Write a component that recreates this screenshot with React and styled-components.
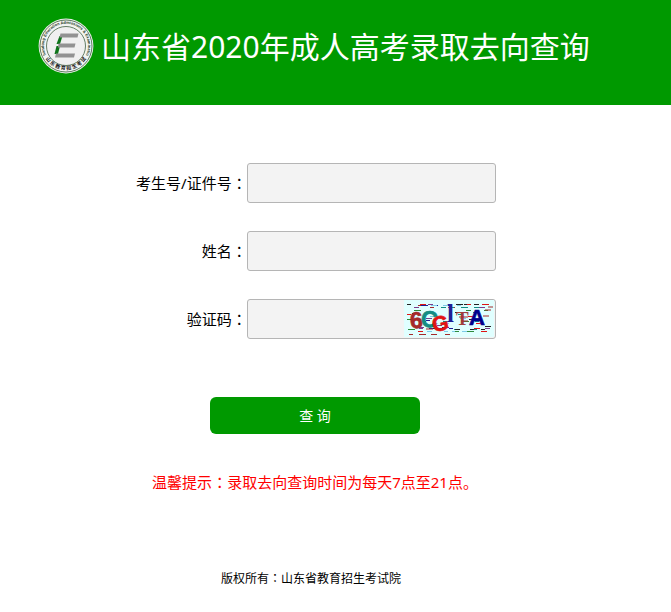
import React, { useState } from 'react';
import styled, { createGlobalStyle } from 'styled-components';

const GlobalStyle = createGlobalStyle`
    body {
        margin: 0;
        background: white;
        color: black;
        font-family: "Noto Sans", "Noto Sans CJK SC", sans-serif;
        font-size: 15px;
        font-weight: 400;
    }
`

const Header = styled.header`
    display: flex;
    align-items: flex-start;
    gap: 7px;
    min-height: 105px;
    padding: 18px 38px 0;
    box-sizing: border-box;
    background: #009900;
`

const Logo = styled.svg`
    flex: none;
    width: 56px;
    height: 56px;
`

const Title = styled.h1`
    margin: 0;
    color: white;
    font-size: 30px;
    font-weight: 400;
    line-height: 58px;
    white-space: nowrap;
`

const Main = styled.main`
    padding: 58px 41px 0 0;
`

const Form = styled.form`
    display: flex;
    flex-direction: column;
    gap: 28px;
`

const Row = styled.div`
    display: grid;
    grid-template-columns: calc(39% + 1px) 249px;
    align-items: center;
`

const Label = styled.label`
    line-height: 20px;
    text-align: right;
    white-space: nowrap;
`

const Colon = styled.span`
    font-family: "Noto Sans CJK TC", sans-serif;
`

const Field = styled.div`
    position: relative;
`

const Input = styled.input`
    display: block;
    width: 100%;
    height: 40px;
    padding: 0 8px;
    padding-right: ${props => props.$withCode ? '98px' : '8px'};
    box-sizing: border-box;
    border: 1px solid #b5b5b5;
    border-radius: 3px;
    background: #f3f3f3;
    font: inherit;
    outline: none;
`

const CodeButton = styled.button`
    position: absolute;
    top: 1px;
    right: 2px;
    padding: 0;
    border: 0;
    background: #e0ffff;
    cursor: pointer;

    svg {
        display: block;
    }
`

const SubmitButton = styled.button`
    align-self: center;
    width: 210px;
    height: 37px;
    margin-top: 30px;
    padding: 0 0 2px;
    border: 0;
    border-radius: 6px;
    background: #009900;
    color: white;
    font: inherit;
    font-size: 14px;
    cursor: pointer;
`

const Hint = styled.p`
    margin: 38px 0 0;
    color: red;
    line-height: 20px;
    text-align: center;
`

const Footer = styled.footer`
    padding: 77px 49px 24px 0;
    font-size: 12px;
    line-height: 18px;
    text-align: center;
`

const fields = [
    { id: 'number', label: '考生号/证件号' },
    { id: 'name', label: '姓名' },
    { id: 'code', label: '验证码', withCode: true },
]

const letters = [
    { char: '6', x: 6, y: 28, size: 23, color: '#a52a2a', tilt: -4 },
    { char: 'C', x: 17, y: 27, size: 23, color: '#148c84', tilt: 4 },
    { char: 'G', x: 28, y: 31, size: 21, color: '#e01414', tilt: -12 },
    { char: 'l', x: 43, y: 22, size: 25, color: '#1e1e96', tilt: 0, serif: true },
    { char: 'T', x: 52, y: 25, size: 19, color: '#a0403c', tilt: 0, serif: true },
    { char: 'A', x: 65, y: 25, size: 22, color: '#00008b', tilt: 0 },
]

const noiseColors = ['#222222', '#1e1e96', '#e01414', '#148c84', '#a52a2a', '#2e8b3c', '#7ecbe8', '#7a3c8c']

// short dashes, two thirds of them along the top and bottom edges
const noise = Array.from({ length: 78 }, (_, i) => {
    const band = [4, 28, 12][i % 3];
    const height = [7, 7, 16][i % 3];

    return {
        x: 3 + (i * 37 + (i * i) % 11) % 79,
        y: band + (i * 5 + (i * i) % 7) % height,
        width: 4 + (i * 5) % 4,
        color: noiseColors[(i * 3 + i % 5) % noiseColors.length],
    }
})

const Emblem = () => (
    <Logo viewBox="0 0 56 56" role="img" aria-label="山东省教育招生考试院">
        <defs>
            <path id="ringTop" d="M8.5 38 A22 22 0 1 1 47.5 38" />
            <path id="ringBottom" d="M7 39.5 A24 24 0 0 0 49 39.5" />
        </defs>
        <circle cx="28" cy="28" r="27.4" fill="#f2f4f2" />
        <circle cx="28" cy="28" r="26" fill="none" stroke="#4c6c4c" strokeWidth="0.9" />
        <circle cx="28" cy="28" r="19.5" fill="#f0f0f0" stroke="#557055" strokeWidth="0.9" />
        <text fontFamily="Liberation Sans, sans-serif" fontSize="4" fontWeight="700" fill="#263d26" textAnchor="middle">
            <textPath href="#ringTop" startOffset="50%">Shandong Education Admissions &amp; Examination</textPath>
        </text>
        <text fontFamily="Noto Sans CJK SC, sans-serif" fontSize="5" fontWeight="700" fill="#111111" textAnchor="middle">
            <textPath href="#ringBottom" startOffset="50%">山 东 教 育 招 生 考 试</textPath>
        </text>
        <path d="M21.5 18 H24.5 L22 26 H18.5Z M18.5 28 H22 L20 36 H16.5Z" fill="#0d7419" />
        <path d="M22.5 15.5 H40.5 L39.5 19.5 H21.5Z M20.5 25.5 H37.5 L36.5 29.5 H20Z M18 35.5 H37 L36 39.5 H17Z" fill="#929292" />
    </Logo>
)

const CodeImage = () => (
    <svg width="90" height="37" viewBox="0 0 90 37" aria-hidden="true">
        <rect width="90" height="37" fill="#e0ffff" />
        {noise.map((dash, i) => (
            <rect key={i} x={dash.x} y={dash.y} width={dash.width} height="1" fill={dash.color} />
        ))}
        {letters.map(letter => (
            <text
                key={letter.char}
                x={letter.x}
                y={letter.y}
                fontFamily={letter.serif ? 'Liberation Serif, serif' : 'Liberation Sans, sans-serif'}
                fontSize={letter.size}
                fontWeight="700"
                fill={letter.color}
                stroke={letter.color}
                strokeWidth={letter.serif ? 0 : 0.7}
                transform={`rotate(${letter.tilt} ${letter.x + 7} ${letter.y - 8})`}
            >
                {letter.char}
            </text>
        ))}
        <path d="M55 17h9M57 21h7M22 29h7M81 10h6M79 16h6M84 7h5" stroke="#a52a2a" strokeWidth="1" />
    </svg>
)

const App = () => {

    const [values, setValues] = useState({ number: '', name: '', code: '' });

    const onChange = (event) => {
        setValues({ ...values, [event.target.name]: event.target.value })
    }

    return (
        <>
            <GlobalStyle />

            <Header>
                <Emblem />
                <Title>山东省2020年成人高考录取去向查询</Title>
            </Header>

            <Main>
                <Form onSubmit={event => event.preventDefault()}>
                    {fields.map(({ id, label, withCode }) => (
                        <Row key={id}>
                            <Label htmlFor={id}>{label}<Colon>：</Colon></Label>
                            <Field>
                                <Input
                                    id={id}
                                    name={id}
                                    value={values[id]}
                                    onChange={onChange}
                                    autoComplete="off"
                                    $withCode={withCode}
                                />
                                {withCode && (
                                    <CodeButton type="button" aria-label="验证码">
                                        <CodeImage />
                                    </CodeButton>
                                )}
                            </Field>
                        </Row>
                    ))}
                    <SubmitButton type="submit">查 询</SubmitButton>
                </Form>
                <Hint>温馨提示<Colon>：</Colon>录取去向查询时间为每天7点至21点。</Hint>
            </Main>

            <Footer>版权所有<Colon>：</Colon>山东省教育招生考试院</Footer>
        </>
    )
}

export default App;
